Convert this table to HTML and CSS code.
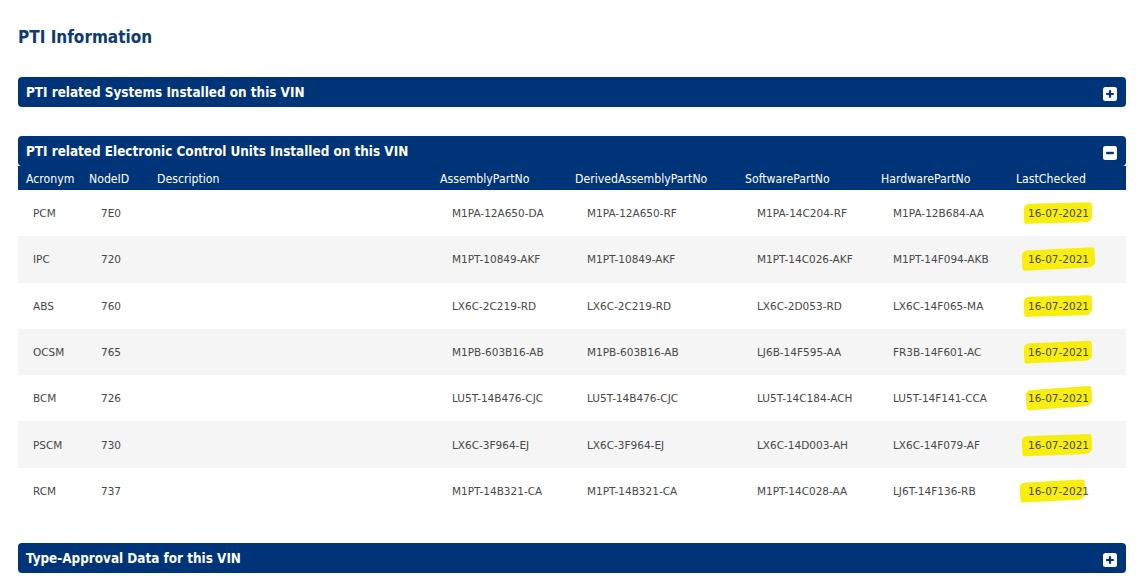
FILE: index.html
```html
<!DOCTYPE html>
<html lang="en">
<head>
<meta charset="utf-8">
<title>PTI Information</title>
<link rel="stylesheet" href="styles.css">
</head>
<body>
<main class="page">
  <h1 class="title">PTI Information</h1>

  <section class="panel">
    <div class="panel-head">
      <span class="panel-title">PTI related Systems Installed on this VIN</span>
      <span class="toggle"><svg viewBox="0 0 14 14" width="14" height="14"><rect x="0" y="0" width="14" height="14" rx="2.5" fill="#fff"/><path d="M7 3.2v7.6M3.2 7h7.6" stroke="#003478" stroke-width="2.2"/></svg></span>
    </div>
  </section>

  <section class="panel">
    <div class="panel-head">
      <span class="panel-title">PTI related Electronic Control Units Installed on this VIN</span>
      <span class="toggle"><svg viewBox="0 0 14 14" width="14" height="14"><rect x="0" y="0" width="14" height="14" rx="2.5" fill="#fff"/><path d="M3.2 7h7.6" stroke="#003478" stroke-width="2.4"/></svg></span>
    </div>
    <table class="ecu">
      <colgroup>
        <col class="c-acr"><col class="c-node"><col class="c-desc"><col class="c-asm"><col class="c-der"><col class="c-sw"><col class="c-hw"><col class="c-last">
      </colgroup>
      <thead>
        <tr><th>Acronym</th><th>NodeID</th><th>Description</th><th>AssemblyPartNo</th><th>DerivedAssemblyPartNo</th><th>SoftwarePartNo</th><th>HardwarePartNo</th><th>LastChecked</th></tr>
      </thead>
      <tbody>
        <tr><td>PCM</td><td>7E0</td><td></td><td>M1PA-12A650-DA</td><td>M1PA-12A650-RF</td><td>M1PA-14C204-RF</td><td>M1PA-12B684-AA</td><td><span class="hl">16-07-2021</span></td></tr>
        <tr><td>IPC</td><td>720</td><td></td><td>M1PT-10849-AKF</td><td>M1PT-10849-AKF</td><td>M1PT-14C026-AKF</td><td>M1PT-14F094-AKB</td><td><span class="hl">16-07-2021</span></td></tr>
        <tr><td>ABS</td><td>760</td><td></td><td>LX6C-2C219-RD</td><td>LX6C-2C219-RD</td><td>LX6C-2D053-RD</td><td>LX6C-14F065-MA</td><td><span class="hl">16-07-2021</span></td></tr>
        <tr><td>OCSM</td><td>765</td><td></td><td>M1PB-603B16-AB</td><td>M1PB-603B16-AB</td><td>LJ6B-14F595-AA</td><td>FR3B-14F601-AC</td><td><span class="hl">16-07-2021</span></td></tr>
        <tr><td>BCM</td><td>726</td><td></td><td>LU5T-14B476-CJC</td><td>LU5T-14B476-CJC</td><td>LU5T-14C184-ACH</td><td>LU5T-14F141-CCA</td><td><span class="hl">16-07-2021</span></td></tr>
        <tr><td>PSCM</td><td>730</td><td></td><td>LX6C-3F964-EJ</td><td>LX6C-3F964-EJ</td><td>LX6C-14D003-AH</td><td>LX6C-14F079-AF</td><td><span class="hl">16-07-2021</span></td></tr>
        <tr><td>RCM</td><td>737</td><td></td><td>M1PT-14B321-CA</td><td>M1PT-14B321-CA</td><td>M1PT-14C028-AA</td><td>LJ6T-14F136-RB</td><td><span class="hl">16-07-2021</span></td></tr>
      </tbody>
    </table>
  </section>

  <section class="panel">
    <div class="panel-head">
      <span class="panel-title">Type-Approval Data for this VIN</span>
      <span class="toggle"><svg viewBox="0 0 14 14" width="14" height="14"><rect x="0" y="0" width="14" height="14" rx="2.5" fill="#fff"/><path d="M7 3.2v7.6M3.2 7h7.6" stroke="#003478" stroke-width="2.2"/></svg></span>
    </div>
  </section>
</main>
</body>
</html>
```

FILE: styles.css
```css
* { box-sizing: border-box; }
html, body { margin: 0; padding: 0; background: #fff; }
body { font-family: "DejaVu Sans Condensed", "DejaVu Sans", sans-serif; }

.page {
  padding: 26px 10px 0 18px;
  display: flex;
  flex-direction: column;
}

.title {
  margin: 0 0 28px 0;
  height: 23px;
  line-height: 23px;
  font-size: 17px;
  font-weight: bold;
  color: #0d3a72;
}

.panel { margin-bottom: 29px; }
.panel:nth-child(3) { margin-bottom: 29px; }
.panel:last-child { margin-bottom: 0; }

.panel-head {
  height: 30px;
  background: #003478;
  border-radius: 4px;
  display: flex;
  align-items: center;
  justify-content: space-between;
  padding: 0 9px 0 8px;
  color: #fff;
}
.panel-title { font-size: 13.4px; font-weight: bold; }
.toggle { display: flex; width: 14px; height: 14px; margin-top: 3px; }

.ecu {
  width: 100%;
  border-collapse: collapse;
  table-layout: fixed;
}
.c-acr { width: 63px; }
.c-node { width: 68px; }
.c-desc { width: 283px; }
.c-asm { width: 135px; }
.c-der { width: 170px; }
.c-sw { width: 136px; }
.c-hw { width: 135px; }
.c-last { width: 118px; }

.ecu th {
  background: #003478;
  color: #fff;
  font-weight: normal;
  font-size: 12.2px;
  text-align: left;
  height: 24px;
  padding: 1px 0 0 8px;
  white-space: nowrap;
}
.ecu td {
  font-family: "DejaVu Sans", sans-serif;
  font-size: 10.5px;
  color: #474747;
  height: 46.3px;
  padding: 0 0 0 20px;
  white-space: nowrap;
  position: relative;
  z-index: 0;
}
.ecu td:first-child { padding-left: 15px; }
.ecu tbody tr:nth-child(even) td { background: #f5f5f5; }

.hl { position: relative; display: inline-block; }
.hl::before {
  content: "";
  position: absolute;
  z-index: -1;
  left: -4px; right: -3px; top: -4px; bottom: -4px;
  background: #f7ee10;
  border-radius: 6px 3px 7px 2px / 5px 2px 6px 3px;
  transform: rotate(-1.5deg);
}
.ecu tbody tr:nth-child(2) .hl::before { transform: rotate(-3deg); right: -6px; left: -6px; }
.ecu tbody tr:nth-child(4) .hl::before { transform: rotate(-2.5deg); }
.ecu tbody tr:nth-child(5) .hl::before { transform: rotate(-4deg); left: -2px; }
.ecu tbody tr:nth-child(6) .hl::before { transform: rotate(-2deg); left: -6px; }
.ecu tbody tr:nth-child(7) .hl::before { transform: rotate(-3deg); left: -8px; right: 4px; }
```
